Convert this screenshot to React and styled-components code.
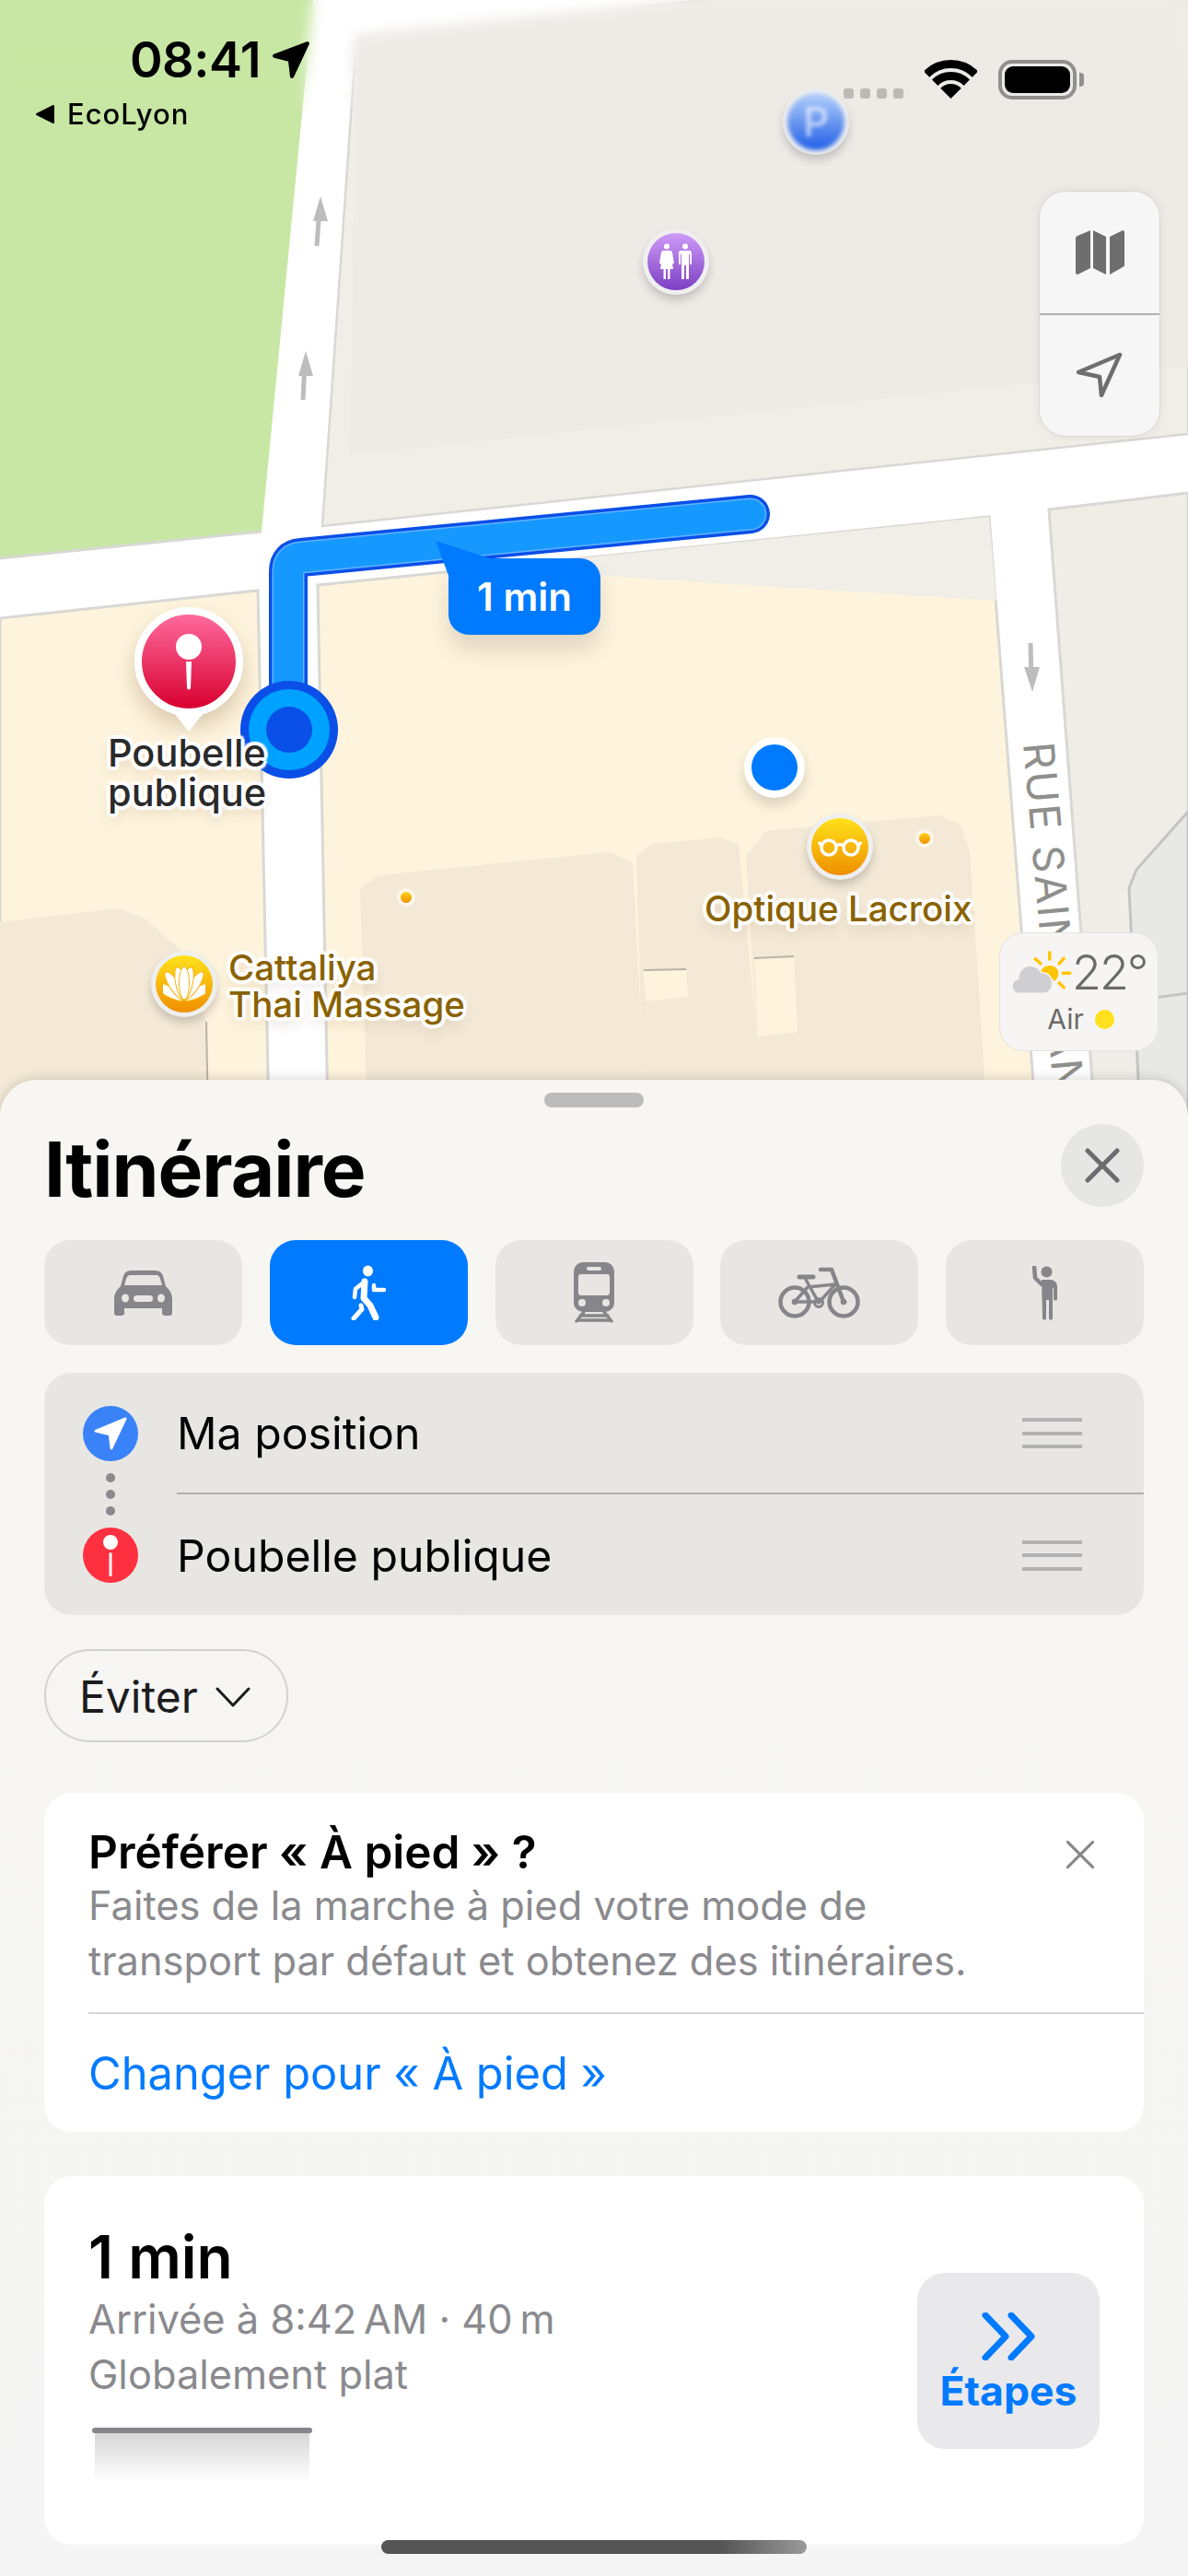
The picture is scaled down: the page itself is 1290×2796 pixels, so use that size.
import React from "react";
import styled, { createGlobalStyle } from "styled-components";

const GlobalStyle = createGlobalStyle`
  html, body {
    margin: 0;
    padding: 0;
    background: #f5f5f4;
  }
  * {
    box-sizing: border-box;
  }
`;

const FONT = `Inter, "Liberation Sans", sans-serif`;
const ICON_GREY = "#86868a";
const BUTTON_GREY = "#e7e6e3";

const ROUTE_D = "M815 558 L327 605 Q313 606 313 620 L313 790";

const MapCanvas = () => (
  <MapSvg viewBox="0 0 1290 1212">
    <rect width="1290" height="1212" fill="#ffffff" />
    {/* parc */}
    <polygon points="0,0 340,0 284,577 0,606" fill="#c8e7a4" />
    <line x1="0" y1="606" x2="284" y2="577" stroke="#d8d8d4" strokeWidth="3" />
    {/* bloc du haut */}
    <polygon points="387,40 1290,-55 1290,471 350,571" fill="#f0eee6" stroke="#d8d8d4" strokeWidth="2.5" />
    <polygon points="387,40 1290,-55 1290,398 380,494" fill="#eeebe7" />
    {/* blocs du bas */}
    <polygon points="0,671 280,641 292,1212 0,1212" fill="#fef3dc" stroke="#d8d8d4" strokeWidth="3" />
    <polygon points="345,635 1074,561 1125,1212 356,1212" fill="#fef3dc" stroke="#d8d8d4" strokeWidth="3" />
    <polygon points="560,613 1074,561 1082,652 651,625" fill="#f0eee6" />
    <polygon points="1139,553 1290,535 1290,1212 1189,1212" fill="#efede6" stroke="#d8d8d4" strokeWidth="3" />
    <polygon points="1290,881 1234,944 1226,964 1238,1212 1290,1212" fill="#e8e8e6" stroke="#c4c4c2" strokeWidth="3" />
    <line x1="1240" y1="1085" x2="1290" y2="1078" stroke="#c4c4c2" strokeWidth="3" />
    {/* batiments */}
    <polygon points="0,1001 128,986 156,996 197,1032 224,1109 226,1212 0,1212" fill="#f3e9d6" />
    <line x1="224" y1="1109" x2="226" y2="1212" stroke="#b9b3a6" strokeWidth="2" />
    <polygon points="391,964 411,950 662,925 687,937 699,1166 699,1212 399,1212" fill="#f3e9d6" />
    <polygon points="691,929 708,916 782,909 802,916 823,1136 827,1166 827,1212 699,1212" fill="#f3e9d6" />
    <polygon points="810,929 831,902 1020,885 1043,895 1053,925 1072,1212 827,1212" fill="#f3e9d6" />
    <polygon points="699,1053 745,1052 747,1082 701,1087" fill="#fef3dc" />
    <line x1="699" y1="1053" x2="745" y2="1052" stroke="#b9b3a6" strokeWidth="2" />
    <polygon points="819,1040 862,1038 866,1120 823,1125" fill="#fef3dc" />
    <line x1="819" y1="1040" x2="862" y2="1038" stroke="#b9b3a6" strokeWidth="2" />
    {/* sens de circulation */}
    <g stroke="#bdbdbd" strokeWidth="5" fill="#bdbdbd">
      <line x1="344" y1="267" x2="347" y2="225" />
      <polygon points="348,213 340,240 356,240" strokeWidth="0" />
      <line x1="329" y1="434" x2="331" y2="392" />
      <polygon points="332,381 324,408 340,408" strokeWidth="0" />
      <line x1="1119" y1="698" x2="1120" y2="738" />
      <polygon points="1121,751 1112,724 1129,724" strokeWidth="0" />
    </g>
    <text
      transform="translate(1111 807) rotate(85)"
      fontFamily={FONT}
      fontSize="46"
      letterSpacing="2"
      fill="#8f8f8c"
    >
      RUE SAINTE-ANNE
    </text>
    {/* trajet */}
    <path d={ROUTE_D} fill="none" stroke="#0a4fe8" strokeWidth="42" strokeLinecap="round" />
    <path d={ROUTE_D} fill="none" stroke="#63b3ff" strokeWidth="35" strokeLinecap="round" />
    <path d={ROUTE_D} fill="none" stroke="#1599ff" strokeWidth="32" strokeLinecap="round" />
    <circle cx="314" cy="792" r="53" fill="#0a4fe8" />
    <circle cx="314" cy="792" r="44" fill="#00a2ff" />
    <circle cx="314" cy="792" r="25" fill="#0a4fe8" />
  </MapSvg>
);

const StatusIcons = () => (
  <>
    <SignalDots>
      <i /><i /><i /><i />
    </SignalDots>
    <svg width="57" height="42" viewBox="0 0 57 42">
      <path d="M2 15.5 A37.5 37.5 0 0 1 55 15.5" fill="none" stroke="#000" strokeWidth="9" />
      <path d="M11.2 24.7 A24.5 24.5 0 0 1 45.8 24.7" fill="none" stroke="#000" strokeWidth="9" />
      <path d="M28.5 42 L17.2 30.7 A16 16 0 0 1 39.8 30.7 Z" fill="#000" />
    </svg>
    <Battery>
      <BatteryFill />
    </Battery>
    <BatteryNub />
  </>
);

const RestroomIcon = () => (
  <svg width="40" height="40" viewBox="0 0 40 40" fill="#fff">
    <circle cx="10" cy="3.5" r="3" />
    <path d="M6 8 H14 C15 8 15.5 9 16 10 L18 22 L16 22.500 L14.500 13 L17 28 H13.500 V39 H11 V28 H9 V39 H6.500 V28 H3 L5.500 13 L4 22.500 L2 22 L4 10 C4.500 9 5 8 6 8Z" />
    <circle cx="30" cy="3.500" r="3" />
    <path d="M25.500 8 H34.500 C36 8 37 9 37 10.500 V23 H35 V12 H34 V39 H31 V24 H29 V39 H26 V12 H25 V23 H23 V10.500 C23 9 24 8 25.500 8Z" />
  </svg>
);

const GlassesIcon = () => (
  <svg width="48" height="22" viewBox="0 0 48 22" fill="none" stroke="#fff" strokeWidth="3.500">
    <circle cx="12" cy="12" r="8" />
    <circle cx="36" cy="12" r="8" />
    <path d="M20 10 Q24 7 28 10 M4 10 L1 6 M44 10 L47 6" />
  </svg>
);

const LotusIcon = () => (
  <svg width="46" height="44" viewBox="0 0 46 44" fill="#fff" stroke="#f8b40c" strokeWidth="1">
    {[-62, 62, -34, 34, -12, 12, 0].map((angle) => (
      <ellipse key={angle} cx="23" cy="21" rx="5.500" ry="18" transform={`rotate(${angle} 23 39)`} />
    ))}
  </svg>
);

const MapPin = () => (
  <svg width="28" height="62" viewBox="0 0 28 62" fill="#fff">
    <circle cx="14" cy="14" r="14" />
    <path d="M11 30 H17 L16 59 Q14 62 12 59 Z" />
  </svg>
);

const WeatherIcon = () => (
  <svg width="68" height="56" viewBox="0 0 70 56">
    <path d="M35 27 A10.500 10.500 0 0 1 55 27 Q55 33 51 37 Z" fill="#ffc400" />
    <g stroke="#ffc400" strokeWidth="3.500" strokeLinecap="round">
      <line x1="45" y1="5" x2="45" y2="12.700" />
      <line x1="60" y1="28.300" x2="67.700" y2="28.300" />
      <line x1="29" y1="12.300" x2="35" y2="17.700" />
      <line x1="61" y1="11.700" x2="55.700" y2="17.700" />
      <line x1="55.700" y1="39" x2="61" y2="44.300" />
    </g>
    <path
      d="M12 51 C6 51 3 47 3 43 C3 38 7 35 10 35 C10 26 16 20 23 20 C30 20 34 24 36 28 C43 27 48 33 48 40 C48 46 44 51 38 51Z"
      fill="#cfced3"
      stroke="#f6f5f3"
      strokeWidth="1.500"
    />
  </svg>
);

const CarIcon = () => (
  <svg width="63" height="49" viewBox="0 0 63 49">
    <path
      d="M19 0 H44 C50 0 52 3 53 6 L56 17 C60 21 63 25 63 31 V46 C63 48 62 49 60 49 H56 C53 49 52 48 52 46 V41 H11 V46 C11 48 10 49 7 49 H3 C1 49 0 48 0 46 V31 C0 25 3 21 7 17 L10 6 C11 3 13 0 19 0Z"
      fill={ICON_GREY}
    />
    <path d="M17 5 H46 C48 5 49 7 50 9 L52 16 H11 L13 9 C14 7 15 5 17 5Z" fill={BUTTON_GREY} />
    <ellipse cx="12" cy="30" rx="4" ry="4.500" fill={BUTTON_GREY} />
    <ellipse cx="51" cy="30" rx="4" ry="4.500" fill={BUTTON_GREY} />
    <rect x="21" y="27" width="21" height="7" rx="3.500" fill={BUTTON_GREY} />
  </svg>
);

const WalkIcon = () => (
  <svg width="38" height="60" viewBox="0 0 38 60" fill="none" stroke="#fff" strokeLinecap="round" strokeLinejoin="round">
    <ellipse cx="18.500" cy="6.500" rx="5.500" ry="6" fill="#fff" stroke="none" />
    <path d="M15 18 L5 26 L4 35" strokeWidth="4.500" />
    <path d="M15 18 L14 36 L21 44 L27 57" strokeWidth="7" />
    <path d="M11 44 L12 48 L3 58" strokeWidth="5" />
    <path d="M25 22 V27 H36" strokeWidth="4.500" />
  </svg>
);

const TrainIcon = () => (
  <svg width="44" height="66" viewBox="0 0 44 66">
    <rect x="0" y="0" width="44" height="54" rx="10" fill={ICON_GREY} />
    <rect x="14" y="5" width="16" height="4" rx="2" fill={BUTTON_GREY} />
    <path d="M5 16 Q5 13 8 13 H36 Q39 13 39 16 V33 Q39 36 36 36 H8 Q5 36 5 33 Z" fill={BUTTON_GREY} />
    <circle cx="9" cy="44" r="4" fill={BUTTON_GREY} />
    <circle cx="35" cy="44" r="4" fill={BUTTON_GREY} />
    <path d="M11 54 L3 64 M33 54 L41 64 M7 58 H37 M5 63 H39" stroke={ICON_GREY} strokeWidth="3.500" strokeLinecap="round" fill="none" />
  </svg>
);

const BikeIcon = () => (
  <svg width="89" height="56" viewBox="0 0 89 56" fill="none" stroke={ICON_GREY} strokeLinecap="round" strokeLinejoin="round">
    <circle cx="18" cy="38" r="15.500" strokeWidth="4.500" />
    <circle cx="71" cy="38" r="15.500" strokeWidth="4.500" />
    <path d="M46 3 H58 L71 38" strokeWidth="4.500" />
    <path d="M23 11 H38" strokeWidth="5" />
    <path d="M29 12 L44 39 L62 19 L32 22 L18 38 H44" strokeWidth="3.500" />
    <circle cx="44" cy="39" r="4.500" strokeWidth="3" />
    <circle cx="18" cy="38" r="3" fill={ICON_GREY} strokeWidth="1" />
    <circle cx="71" cy="38" r="3" fill={ICON_GREY} strokeWidth="1" />
  </svg>
);

const HailIcon = () => (
  <svg width="28" height="59" viewBox="0 0 28 59" fill={ICON_GREY}>
    <circle cx="15.500" cy="6.500" r="6" />
    <path d="M2 1 L3 13 L10 20" fill="none" stroke={ICON_GREY} strokeWidth="4.500" strokeLinecap="round" strokeLinejoin="round" />
    <path d="M10 15 H19 C24 15 27 18 27 23 V36 C27 38 23 38 23 36 V24 H22 V57 C22 59 18 59 18 57 V37 H15 V57 C15 59 11 59 11 57 Z" />
  </svg>
);

const NavArrow = ({ color }) => (
  <svg width="36" height="36" viewBox="0 0 40 40" fill={color} stroke={color} strokeWidth="3" strokeLinejoin="round">
    <path d="M38 2 L2 17 L19 21 L21 38 Z" />
  </svg>
);

const Handle = () => (
  <HandleLines>
    <i /><i /><i />
  </HandleLines>
);

const CloseIcon = ({ size, color, weight }) => (
  <svg width={size} height={size} viewBox="0 0 40 40" fill="none" stroke={color} strokeWidth={weight} strokeLinecap="round">
    <path d="M4 4 L36 36 M36 4 L4 36" />
  </svg>
);

const MODES = [
  { key: "car", icon: <CarIcon /> },
  { key: "walk", icon: <WalkIcon />, active: true },
  { key: "train", icon: <TrainIcon /> },
  { key: "bike", icon: <BikeIcon /> },
  { key: "hail", icon: <HailIcon /> },
];

const App = () => {
  return (
    <Phone>
      <GlobalStyle />
      <MapArea>
        <MapCanvas />
        <TopBlur />
        <Clock>
          <span>08:41</span>
          <svg width="42" height="42" viewBox="0 0 40 40" fill="#000" stroke="#000" strokeWidth="4" strokeLinejoin="round">
            <path d="M37 3 L3 16 L19 20 L21 37 Z" />
          </svg>
        </Clock>
        <BackLink>
          <svg width="22" height="22" viewBox="0 0 22 22" fill="#000" stroke="#000" strokeWidth="2" strokeLinejoin="round">
            <path d="M2 11 L20 2 V20 Z" />
          </svg>
          EcoLyon
        </BackLink>
        <StatusRight>
          <StatusIcons />
        </StatusRight>

        <Marker $x={886} $y={132} $from="#b5d0fb" $to="#1f5fe6" $soft>
          <ParkingLetter>P</ParkingLetter>
        </Marker>
        <Marker $x={734} $y={284} $from="#cf9cf8" $to="#7c3fc4">
          <RestroomIcon />
        </Marker>
        <Marker $x={912} $y={919} $from="#ffe11a" $to="#ef8f00">
          <GlassesIcon />
        </Marker>
        <Marker $x={200} $y={1068} $from="#ffe11a" $to="#ef8f00">
          <LotusIcon />
        </Marker>
        <TinyDot $x={441} $y={974} />
        <TinyDot $x={1004} $y={910} />
        <UserDot />

        <MapControls>
          <ControlButton>
            <svg width="53" height="50" viewBox="0 0 53 50" fill="#6e6e6e">
              <path d="M16 1 V42 L2 49 Q0 49 0 47 V9 Q0 8 2 7 Z" />
              <path d="M19 1 L33 8 V49 L19 42 Z" />
              <path d="M37 8 L51 1 Q53 1 53 3 V39 Q53 40 51 41 L37 49 Z" />
            </svg>
          </ControlButton>
          <ControlButton>
            <svg width="50" height="50" viewBox="0 0 50 50" fill="none" stroke="#6e6e6e" strokeWidth="4.500" strokeLinejoin="round">
              <path d="M47 3 L2 22 L25 27 L27 47 Z" />
            </svg>
          </ControlButton>
        </MapControls>

        <Weather>
          <WeatherTop>
            <WeatherIcon />
            <Temperature>22°</Temperature>
          </WeatherTop>
          <AirRow>
            Air
            <AirDot />
          </AirRow>
        </Weather>

        <Callout>1 min</Callout>
        <PinBalloon>
          <MapPin />
        </PinBalloon>
        <DestinationLabel>Poubelle<br />publique</DestinationLabel>
        <PoiLabel $x={765} $y={966}>Optique Lacroix</PoiLabel>
        <PoiLabel $x={248} $y={1030}>Cattaliya<br />Thai Massage</PoiLabel>
      </MapArea>

      <Sheet>
        <Grabber />
        <SheetHeader>
          <Title>Itinéraire</Title>
          <CloseButton>
            <CloseIcon size={40} color="#6c6c70" weight={5} />
          </CloseButton>
        </SheetHeader>

        <ModeRow>
          {MODES.map((mode) => (
            <ModeButton key={mode.key} $active={mode.active}>
              {mode.icon}
            </ModeButton>
          ))}
        </ModeRow>

        <RouteBox>
          <RouteRow>
            <RouteBadge $color="#3a82f7">
              <NavArrow color="#fff" />
            </RouteBadge>
            <RouteText $divider>
              Ma position
              <Handle />
            </RouteText>
          </RouteRow>
          <RouteDots>
            <i /><i /><i />
          </RouteDots>
          <RouteRow>
            <RouteBadge $color="#ff3040">
              <svg width="16" height="46" viewBox="0 0 16 46" fill="#fff">
                <circle cx="8" cy="9" r="8" />
                <rect x="6.500" y="20" width="3" height="26" rx="1.500" />
              </svg>
            </RouteBadge>
            <RouteText>
              Poubelle publique
              <Handle />
            </RouteText>
          </RouteRow>
        </RouteBox>

        <AvoidButton>
          Éviter
          <svg width="38" height="22" viewBox="0 0 38 22" fill="none" stroke="#1c1c1e" strokeWidth="3" strokeLinecap="round" strokeLinejoin="round">
            <path d="M2 2 L19 20 L36 2" />
          </svg>
        </AvoidButton>

        <PromptCard>
          <PromptBody>
            <PromptClose>
              <CloseIcon size={34} color="#86868a" weight={3.500} />
            </PromptClose>
            <PromptTitle>Préférer « À pied » ?</PromptTitle>
            <GreyLine>Faites de la marche à pied votre mode de</GreyLine>
            <GreyLine>transport par défaut et obtenez des itinéraires.</GreyLine>
          </PromptBody>
          <PromptLink>Changer pour « À pied »</PromptLink>
        </PromptCard>

        <RouteCard>
          <RouteSummary>
            <Duration>1 min</Duration>
            <GreyLine>{"Arrivée à 8:42\u202FAM · 40\u202Fm"}</GreyLine>
            <GreyLine>Globalement plat</GreyLine>
            <Elevation />
          </RouteSummary>
          <StepsButton>
            <svg width="58" height="52" viewBox="0 0 58 52" fill="none" stroke="#007aff" strokeWidth="7" strokeLinecap="round" strokeLinejoin="round">
              <path d="M4 3 L26 26 L4 49 M32 3 L54 26 L32 49" />
            </svg>
            <StepsLabel>Étapes</StepsLabel>
          </StepsButton>
        </RouteCard>
      </Sheet>
      <HomeIndicator />
    </Phone>
  );
};

const Phone = styled.div`
  position: relative;
  width: 1290px;
  height: 2796px;
  overflow: hidden;
  font-family: ${FONT};
  background: #f5f5f4;
`;

const MapArea = styled.div`
  position: relative;
  height: 1212px;
  margin-bottom: -40px;
`;

const MapSvg = styled.svg`
  display: block;
  width: 1290px;
  height: 1212px;
`;

const TopBlur = styled.div`
  position: absolute;
  inset: 0 0 auto 0;
  height: 130px;
  backdrop-filter: blur(7px);
  mask-image: linear-gradient(#000 40%, transparent);
`;

const Clock = styled.div`
  position: absolute;
  left: 141px;
  top: 36px;
  display: flex;
  align-items: center;
  gap: 12px;
  font-size: 54px;
  font-weight: 600;
  line-height: 58px;
  letter-spacing: -0.5px;
  color: #000;
`;

const BackLink = styled.div`
  position: absolute;
  left: 38px;
  top: 106px;
  display: flex;
  align-items: center;
  gap: 13px;
  font-size: 31px;
  font-weight: 500;
  line-height: 36px;
  letter-spacing: 1px;
  color: #000;
`;

const StatusRight = styled.div`
  position: absolute;
  left: 916px;
  top: 65px;
  display: flex;
  align-items: flex-start;
`;

const SignalDots = styled.div`
  display: flex;
  gap: 7px;
  margin: 31px 23px 0 0;

  i {
    display: block;
    width: 11px;
    height: 11px;
    border-radius: 3px;
    background: #bcbab6;
  }
`;

const Battery = styled.div`
  width: 85px;
  height: 43px;
  margin-left: 23px;
  padding: 3px;
  border: 4px solid #8f8f8d;
  border-radius: 15px;
`;

const BatteryFill = styled.div`
  height: 100%;
  border-radius: 9px;
  background: #000;
`;

const BatteryNub = styled.div`
  width: 5px;
  height: 15px;
  margin: 14px 0 0 3px;
  border-radius: 0 4px 4px 0;
  background: #8f8f8d;
`;

const Marker = styled.div`
  position: absolute;
  left: ${(p) => p.$x - 36}px;
  top: ${(p) => p.$y - 36}px;
  width: 72px;
  height: 72px;
  padding: 5px;
  border-radius: 50%;
  background: #efefef;
  box-shadow: 0 6px 10px rgba(0, 0, 0, 0.18);

  &::before {
    content: "";
    position: absolute;
    inset: 5px;
    border-radius: 50%;
    background: linear-gradient(${(p) => p.$from}, ${(p) => p.$to});
    filter: ${(p) => (p.$soft ? "blur(2.5px)" : "none")};
  }

  & > * {
    position: absolute;
    left: 50%;
    top: 50%;
    transform: translate(-50%, -50%);
  }
`;

const ParkingLetter = styled.span`
  font-size: 44px;
  font-weight: 500;
  color: rgba(255, 255, 255, 0.6);
  filter: blur(2px);
`;

const TinyDot = styled.div`
  position: absolute;
  left: ${(p) => p.$x - 10}px;
  top: ${(p) => p.$y - 10}px;
  width: 20px;
  height: 20px;
  border: 4px solid #fdf6e8;
  border-radius: 50%;
  background: linear-gradient(#ffd21a, #ef8f00);
`;

const UserDot = styled.div`
  position: absolute;
  left: 808px;
  top: 800px;
  width: 66px;
  height: 66px;
  border: 8px solid #fff;
  border-radius: 50%;
  background: #007aff;
  box-shadow: 0 8px 14px rgba(0, 0, 0, 0.14);
`;

const MapControls = styled.div`
  position: absolute;
  left: 1129px;
  top: 208px;
  width: 130px;
  height: 265px;
  display: flex;
  flex-direction: column;
  border-radius: 28px;
  background: #f6f6f6;
  box-shadow: 0 0 12px rgba(0, 0, 0, 0.08), 0 0 0 1px rgba(0, 0, 0, 0.05);
`;

const ControlButton = styled.div`
  flex: 1;
  display: flex;
  align-items: center;
  justify-content: center;

  & + & {
    border-top: 2px solid #b0b0b0;
  }
`;

const Weather = styled.div`
  position: absolute;
  left: 1085px;
  top: 1012px;
  width: 173px;
  height: 129px;
  padding: 15px 0 0 10px;
  border: 1.5px solid #e3e3e1;
  border-radius: 26px;
  background: #f6f5f3;
`;

const WeatherTop = styled.div`
  display: flex;
  align-items: center;
`;

const Temperature = styled.span`
  font-size: 52px;
  font-weight: 300;
  line-height: 56px;
  letter-spacing: -2px;
  color: #6b6b68;
`;

const AirRow = styled.div`
  display: flex;
  align-items: center;
  justify-content: center;
  gap: 12px;
  margin: 5px 0 0 -6px;
  font-size: 30px;
  line-height: 34px;
  color: #6b6b68;
`;

const AirDot = styled.span`
  width: 21px;
  height: 21px;
  border-radius: 50%;
  background: #ffe11f;
`;

const Callout = styled.div`
  position: absolute;
  left: 487px;
  top: 606px;
  width: 165px;
  height: 83px;
  display: flex;
  align-items: center;
  justify-content: center;
  border-radius: 22px;
  font-size: 42px;
  font-weight: 600;
  color: #fff;
  background: #007aff;
  box-shadow: 0 16px 24px rgba(0, 0, 0, 0.12);

  &::before {
    content: "";
    position: absolute;
    left: -14px;
    top: -19px;
    width: 62px;
    height: 40px;
    background: #007aff;
    clip-path: polygon(0 0, 100% 50%, 100% 100%, 24% 100%);
    border-radius: 4px;
  }
`;

const PinBalloon = styled.div`
  position: absolute;
  left: 146px;
  top: 659px;
  width: 118px;
  height: 118px;
  display: flex;
  align-items: flex-start;
  justify-content: center;
  padding-top: 21px;
  border: 8px solid #fff;
  border-radius: 50%;
  background: linear-gradient(#ff6a9e, #d8002f);
  box-shadow: 0 12px 22px rgba(90, 60, 20, 0.22);

  &::after {
    content: "";
    position: absolute;
    left: 50%;
    bottom: -25px;
    width: 32px;
    height: 20px;
    margin-left: -16px;
    background: #fff;
    clip-path: polygon(0 0, 100% 0, 50% 100%);
  }
`;

const HALO = [
  "0 0 3px #fff",
  "4px 0 1px #fff",
  "-4px 0 1px #fff",
  "0 4px 1px #fff",
  "0 -4px 1px #fff",
  "3px 3px 2px #fff",
  "-3px 3px 2px #fff",
  "3px -3px 2px #fff",
  "-3px -3px 2px #fff",
  "0 8px 14px rgba(90, 60, 20, 0.2)",
].join(", ");

const DestinationLabel = styled.div`
  position: absolute;
  left: 117px;
  top: 796px;
  font-size: 41.5px;
  font-weight: 500;
  line-height: 43px;
  color: #2a2a2a;
  text-shadow: ${HALO};
`;

const PoiLabel = styled.div`
  position: absolute;
  left: ${(p) => p.$x}px;
  top: ${(p) => p.$y}px;
  font-size: 38.5px;
  font-weight: 500;
  line-height: 40px;
  white-space: nowrap;
  color: #8a6200;
  text-shadow: ${HALO};
`;

const Sheet = styled.div`
  position: relative;
  height: 1624px;
  padding: 14px 48px 0;
  border-radius: 40px 40px 0 0;
  background: linear-gradient(#f7f6f2, #f5f5f5);
  box-shadow: 0 -2px 12px rgba(0, 0, 0, 0.14);
`;

const Grabber = styled.div`
  width: 108px;
  height: 16px;
  margin: 0 auto;
  border-radius: 8px;
  background: #bcbcbc;
`;

const SheetHeader = styled.div`
  display: flex;
  align-items: center;
  justify-content: space-between;
  margin-top: 18px;
  height: 90px;
`;

const Title = styled.h1`
  margin: 10px 0 0 0;
  font-size: 82px;
  font-weight: 700;
  letter-spacing: -1px;
  line-height: 90px;
  color: #000;
`;

const CloseButton = styled.div`
  width: 90px;
  height: 90px;
  display: flex;
  align-items: center;
  justify-content: center;
  border-radius: 50%;
  background: #e6e6e4;
`;

const ModeRow = styled.div`
  display: grid;
  grid-template-columns: repeat(5, 215px);
  justify-content: space-between;
  margin-top: 36px;
`;

const ModeButton = styled.div`
  height: 114px;
  display: flex;
  align-items: center;
  justify-content: center;
  border-radius: 28px;
  background: ${(p) => (p.$active ? "#007aff" : BUTTON_GREY)};
`;

const RouteBox = styled.div`
  position: relative;
  margin-top: 30px;
  border-radius: 30px;
  background: #e7e6e3;
`;

const RouteRow = styled.div`
  display: flex;
  align-items: stretch;
  height: 131.5px;
  padding-left: 42px;
`;

const RouteBadge = styled.div`
  flex: none;
  width: 60px;
  height: 60px;
  margin: 36px 42px 0 0;
  display: flex;
  align-items: center;
  justify-content: center;
  border-radius: 50%;
  background: ${(p) => p.$color};
`;

const RouteText = styled.div`
  flex: 1;
  display: flex;
  align-items: center;
  justify-content: space-between;
  padding-right: 67px;
  padding-top: 2px;
  font-size: 48.2px;
  color: #000;
  border-bottom: ${(p) => (p.$divider ? "2px solid #b0b0b0" : "none")};
`;

const HandleLines = styled.div`
  display: flex;
  flex-direction: column;
  gap: 10.500px;

  i {
    display: block;
    width: 65px;
    height: 4px;
    background: #b2b2b2;
  }
`;

const RouteDots = styled.div`
  position: absolute;
  left: 67px;
  top: 109px;
  display: flex;
  flex-direction: column;
  gap: 8px;

  i {
    display: block;
    width: 10px;
    height: 10px;
    border-radius: 50%;
    background: #8a8a8e;
  }
`;

const AvoidButton = styled.div`
  width: 265px;
  height: 101px;
  margin-top: 37px;
  padding: 2px 0 0 36px;
  display: flex;
  align-items: center;
  gap: 19px;
  border: 2px solid #d2d2d0;
  border-radius: 50px;
  font-size: 48px;
  color: #1c1c1e;
`;

const PromptCard = styled.div`
  margin-top: 55px;
  height: 368px;
  padding-left: 48px;
  border-radius: 30px;
  background: #fff;
`;

const PromptBody = styled.div`
  position: relative;
  height: 240px;
  padding-top: 44px;
  border-bottom: 2px solid #d6d6d8;
`;

const PromptClose = styled.div`
  position: absolute;
  right: 52px;
  top: 50px;
`;

const PromptTitle = styled.div`
  margin-bottom: 8px;
  font-size: 49.5px;
  font-weight: 600;
  line-height: 40px;
  color: #000;
`;

const GreyLine = styled.div`
  font-size: 43.4px;
  line-height: 60px;
  color: #8a8a8e;
`;

const PromptLink = styled.div`
  height: 126px;
  padding-top: 2px;
  display: flex;
  align-items: center;
  font-size: 48.8px;
  color: #007aff;
`;

const RouteCard = styled.div`
  margin-top: 48px;
  height: 400px;
  padding: 0 48px;
  display: flex;
  align-items: center;
  justify-content: space-between;
  border-radius: 30px;
  background: #fff;
`;

const RouteSummary = styled.div`
  align-self: flex-start;
  padding-top: 58px;
`;

const Duration = styled.div`
  margin-bottom: 7px;
  font-size: 64px;
  font-weight: 600;
  line-height: 60px;
  color: #000;
`;

const Elevation = styled.div`
  width: 233px;
  height: 59px;
  margin: 28px 0 0 7px;
  position: relative;
  background: linear-gradient(#d2d2d2, #ffffff);

  &::before {
    content: "";
    position: absolute;
    left: -3px;
    right: -3px;
    top: 0;
    height: 6px;
    border-radius: 3px;
    background: #86868a;
  }
`;

const StepsButton = styled.div`
  width: 198px;
  height: 191px;
  padding-top: 5px;
  display: flex;
  flex-direction: column;
  align-items: center;
  justify-content: center;
  gap: 8px;
  border-radius: 30px;
  background: #e9e9eb;
`;

const StepsLabel = styled.div`
  font-size: 44.5px;
  font-weight: 700;
  line-height: 50px;
  color: #007aff;
`;

const HomeIndicator = styled.div`
  position: absolute;
  left: 414px;
  top: 2757px;
  width: 462px;
  height: 15px;
  border-radius: 8px;
  background: linear-gradient(90deg, #555 0%, #555 80%, #9a9a9a 100%);
`;

export default App;
